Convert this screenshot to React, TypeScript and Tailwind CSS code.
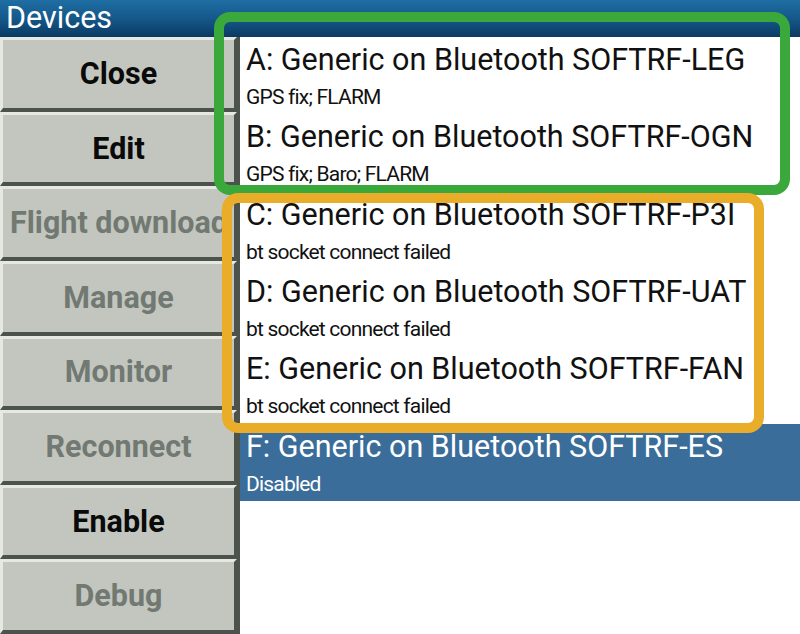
import React from 'react';

// 왼쪽 버튼 목록
const buttons = [
  { label: 'Close', enabled: true },
  { label: 'Edit', enabled: true },
  { label: 'Flight download', enabled: false },
  { label: 'Manage', enabled: false },
  { label: 'Monitor', enabled: false },
  { label: 'Reconnect', enabled: false },
  { label: 'Enable', enabled: true },
  { label: 'Debug', enabled: false },
];

// 장치 목록
const devices = [
  { title: 'A: Generic on Bluetooth SOFTRF-LEG', status: 'GPS fix; FLARM' },
  { title: 'B: Generic on Bluetooth SOFTRF-OGN', status: 'GPS fix; Baro; FLARM' },
  { title: 'C: Generic on Bluetooth SOFTRF-P3I', status: 'bt socket connect failed' },
  { title: 'D: Generic on Bluetooth SOFTRF-UAT', status: 'bt socket connect failed' },
  { title: 'E: Generic on Bluetooth SOFTRF-FAN', status: 'bt socket connect failed' },
  { title: 'F: Generic on Bluetooth SOFTRF-ES', status: 'Disabled', selected: true },
];

export default function App() {
  return (
    <div
      className="relative w-[800px] h-[634px] overflow-hidden flex flex-col bg-white"
      style={{ fontFamily: 'Roboto, "Liberation Sans", sans-serif' }}
    >
      {/* 타이틀 바 */}
      <div className="h-[37px] shrink-0 bg-gradient-to-b from-[#1f6ea4] via-[#15588a] to-[#0a3a63] px-[6px] flex items-center">
        <span className="text-white text-[30.5px] leading-none">Devices</span>
      </div>

      <div className="flex flex-1 min-h-0">
        {/* 버튼 열 */}
        <div className="w-[237px] shrink-0 flex flex-col">
          {buttons.map((b) => {
            const long = b.label === 'Flight download';
            return (
              <div
                key={b.label}
                className={`flex-1 flex items-center overflow-hidden whitespace-nowrap bg-[#c3c6bf] border-t-[3px] border-l-[3px] border-t-[#e6e9e2] border-l-[#e6e9e2] border-b-[4px] border-r-[3px] border-b-[#4b534c] border-r-[#4b534c] ${long ? 'justify-start pl-[7px]' : 'justify-center'}`}
              >
                <span
                  className={`text-[30.5px] font-bold ${b.enabled ? 'text-[#0a0a0a]' : 'text-[#717972]'}`}
                >
                  {b.label}
                </span>
              </div>
            );
          })}
        </div>

        {/* 장치 목록 */}
        <div className="flex-1 flex flex-col bg-white border-l-[3px] border-[#4b534c]">
          {devices.map((d) => (
            <div
              key={d.title}
              className={`h-[77.33px] shrink-0 pl-[6px] pt-[6px] ${d.selected ? 'bg-[#3a6d9a] text-white' : 'text-[#111]'}`}
            >
              <div className="text-[30.5px] leading-[34px] whitespace-nowrap">{d.title}</div>
              <div className="text-[21px] leading-[24px] tracking-[-0.8px] mt-[8px] whitespace-nowrap">{d.status}</div>
            </div>
          ))}
        </div>
      </div>

      {/* 강조 표시 테두리 */}
      <div className="absolute left-[214px] top-[12px] w-[576px] h-[183px] border-[10px] border-[#3aa83a] rounded-[16px]" />
      <div className="absolute left-[222px] top-[193px] w-[542px] h-[240px] border-[10px] border-[#e9ad2a] rounded-[16px]" />
    </div>
  );
}
